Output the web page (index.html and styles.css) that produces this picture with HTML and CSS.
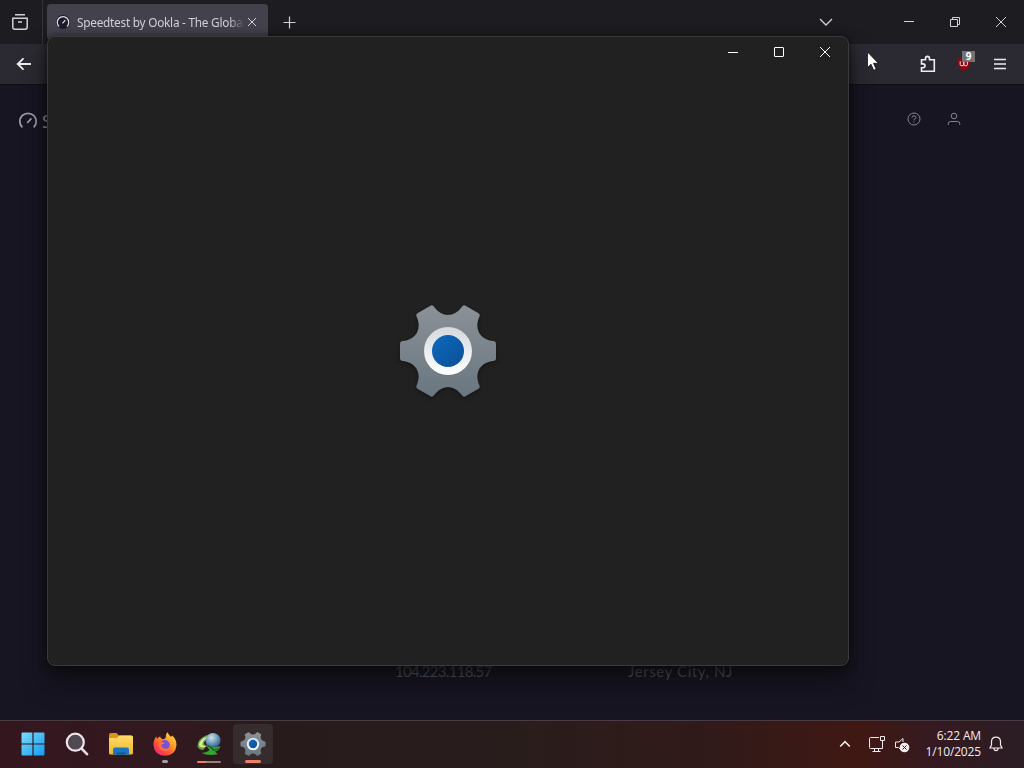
FILE: index.html
```html
<!DOCTYPE html>
<html lang="en">
<head>
<meta charset="utf-8">
<title>Desktop</title>
<link rel="stylesheet" href="styles.css">
</head>
<body>
<svg class="defs" width="0" height="0">
  <defs>
    <linearGradient id="metal" x1="0" y1="0" x2="0" y2="1"><stop offset="0" stop-color="#8b9197"/><stop offset="1" stop-color="#697680"/></linearGradient>
    <linearGradient id="ring" x1="0" y1="0" x2="0" y2="1"><stop offset="0" stop-color="#d5d9dc"/><stop offset="1" stop-color="#ffffff"/></linearGradient>
    <linearGradient id="hub" x1="0" y1="0" x2="1" y2="1"><stop offset="0" stop-color="#0d69bd"/><stop offset="1" stop-color="#0b4f96"/></linearGradient>
    <linearGradient id="win" x1="0" y1="0" x2="1" y2="1"><stop offset="0" stop-color="#7bdcfb"/><stop offset="1" stop-color="#149af0"/></linearGradient>
    <linearGradient id="folder" x1="0" y1="0" x2="0" y2="1"><stop offset="0" stop-color="#ffdc68"/><stop offset="1" stop-color="#f0b62d"/></linearGradient>
    <linearGradient id="fire" x1="1" y1="0" x2="0.2" y2="1"><stop offset="0" stop-color="#ffe94a"/><stop offset=".45" stop-color="#ff9626"/><stop offset=".75" stop-color="#ff4a3c"/><stop offset="1" stop-color="#e62482"/></linearGradient>
    <radialGradient id="globe" cx=".4" cy=".3" r=".8"><stop offset="0" stop-color="#d1e0e8"/><stop offset=".5" stop-color="#6d99bd"/><stop offset="1" stop-color="#1d3e78"/></radialGradient>
    <symbol id="gear" viewBox="-50 -50 100 100">
      <path d="M48-7Q48-10 45-10C32-11.5 26-22 31.2-34Q32.7-36.6 30.1-38.1L17.9-45.1Q15.3-46.6 13.8-44C6-33.5-6-33.5-13.8-44Q-15.3-46.6-17.9-45.1L-30.1-38.1Q-32.7-36.6-31.2-34C-26-22-32-11.5-45-10Q-48-10-48-7V7Q-48 10-45 10C-32 11.5-26 22-31.2 34Q-32.7 36.6-30.1 38.1L-17.9 45.1Q-15.3 46.6-13.8 44C-6 33.5 6 33.5 13.8 44Q15.3 46.6 17.9 45.1L30.1 38.1Q32.7 36.6 31.2 34C26 22 32 11.5 45 10Q48 10 48 7Z" fill="url(#metal)"/>
      <circle r="24" fill="url(#ring)"/><circle r="16" fill="url(#hub)"/>
    </symbol>
    <symbol id="gauge" viewBox="0 0 20 20">
      <path d="M4.3 16.4A8.2 8.2 0 1 1 15.7 16.4M9.2 12L13.4 7.4" fill="none" stroke="currentColor" stroke-width="1.8"/>
    </symbol>
  </defs>
</svg>
<div class="desktop">
  <section class="browser">
    <header class="tabs">
      <div class="history"><svg width="18" height="18" viewBox="0 0 18 18"><path d="M4 1.8H14M1.8 5.2H16.2V14Q16.2 16.2 14 16.2H4Q1.8 16.2 1.8 14ZM7 9H11" /></svg></div>
      <div class="tab">
        <svg class="favicon" width="14" height="14"><use href="#gauge"/></svg>
        <span class="tab-title">Speedtest by Ookla - The Globa</span>
        <svg class="tab-close" width="10" height="10" viewBox="0 0 10 10"><path d="M1 1L9 9M9 1L1 9"/></svg>
      </div>
      <svg class="new-tab" width="13" height="13" viewBox="0 0 13 13"><path d="M6.5 .5V12.5M.5 6.5H12.5"/></svg>
      <div class="frame-buttons">
        <svg class="all-tabs" width="14" height="14" viewBox="0 0 14 14"><path d="M1 4L7 10L13 4"/></svg>
        <svg width="12" height="12" viewBox="0 0 12 12"><path d="M1 5.5H11"/></svg>
        <svg width="12" height="12" viewBox="0 0 12 12"><path d="M1.5 3.5H8.5V10.5H1.5ZM3.5 3V1.5H10.5V8.5H9"/></svg>
        <svg width="12" height="12" viewBox="0 0 12 12"><path d="M1 1L11 11M11 1L1 11"/></svg>
      </div>
    </header>
    <div class="toolbar">
      <svg width="16" height="14" viewBox="0 0 16 14"><path d="M15 7H1.5M7.5 1.3L1.7 7L7.5 12.7" stroke-width="1.8"/></svg>
      <div class="extensions">
        <svg width="16" height="18" viewBox="0 0 16 18"><path d="M1.5 6V4.8H5.5V3.7Q5.5 1.4 7.5 1.4T9.5 3.7V4.8H14.3V16.2H1.5V12.7H3Q5 12.5 5 10.8T3 8.9H1.5V6" stroke-width="1.6"/></svg>
        <div class="blocker"><svg width="16" height="16" viewBox="0 0 16 16"><path class="shield" d="M8 .8Q10 2.4 14.5 2.5Q15.8 11 8 15.6Q.2 11 1.5 2.5Q6 2.4 8 .8Z"/><path class="mark" d="M4.2 5.3V8.5Q4.2 9.8 6 9.8T7.8 8.5V6V8.5Q7.8 9.8 9.6 9.8T11.4 8.5V6"/></svg><span class="count">9</span></div>
        <svg width="14" height="12" viewBox="0 0 14 12"><path d="M1 1.5H13M1 6H13M1 10.5H13" stroke-width="1.5"/></svg>
      </div>
    </div>
    <main class="page">
      <div class="site-head">
        <div class="brand"><svg width="20" height="20"><use href="#gauge"/></svg><span>SPEEDTEST</span></div>
        <div class="account">
          <svg width="14" height="14" viewBox="0 0 14 14"><circle cx="7" cy="7" r="6"/><path d="M5 5.6Q5 3.8 7 3.8T9 5.6Q9 6.6 7 7.4V8.4M7 9.5V10.7"/></svg>
          <svg width="14" height="14" viewBox="0 0 14 14"><circle cx="7" cy="4" r="2.8"/><path d="M1.3 13V11.5Q1.3 9.5 3.5 9.5H10.5Q12.7 9.5 12.7 11.5V13"/></svg>
        </div>
      </div>
      <div class="connection"><span class="ip">104.223.118.57</span><span class="city">Jersey City, NJ</span></div>
    </main>
  </section>

  <section class="settings">
    <div class="caption">
      <svg width="12" height="12" viewBox="0 0 12 12"><path d="M1 6.5H11"/></svg>
      <svg width="12" height="12" viewBox="0 0 12 12"><rect x="1.5" y="1.5" width="9" height="9" rx=".5"/></svg>
      <svg width="12" height="12" viewBox="0 0 12 12"><path d="M1 1L11 11M11 1L1 11"/></svg>
    </div>
    <div class="splash"><svg width="100" height="100"><use href="#gear"/></svg></div>
  </section>

  <svg class="pointer" width="14" height="21" viewBox="0 0 14 21"><path d="M1.5 1V16.6L5 13.2L7.7 19.3L10.2 18.2L7.5 12.3H12.4Z" fill="#fff" stroke="#111" stroke-width=".8"/></svg>

  <footer class="taskbar">
    <div class="apps">
      <div class="app"><svg width="24" height="24" viewBox="0 0 24 24" fill="url(#win)"><path d="M.5 1.5Q.5.5 1.5.5H11.4V11.4H.5ZM12.6.5H22.5Q23.5.5 23.5 1.5V11.4H12.6ZM.5 12.6H11.4V23.5H1.5Q.5 23.5.5 22.5ZM12.6 12.6H23.5V22.5Q23.5 23.5 22.5 23.5H12.6Z"/></svg></div>
      <div class="app"><svg width="24" height="24" viewBox="0 0 24 24"><path d="M16.5 16.5L22 22.2" stroke="#e8dce2" stroke-width="2.6" stroke-linecap="round"/><circle cx="10.3" cy="10.2" r="8.5" fill="#514951" stroke="#efe5ea" stroke-width="2.2"/></svg></div>
      <div class="app"><svg width="26" height="24" viewBox="0 0 26 24"><path d="M1 3Q1 1 3 1H8.5L11 3.5H23V10H1Z" fill="#d99717"/><path d="M1 6H8.8L11.5 3.5H23.5Q25 3.5 25 5V21Q25 22.5 23.5 22.5H2.5Q1 22.5 1 21Z" fill="url(#folder)"/><path d="M5 22.5V17.5Q5 15.5 7 15.5H19Q21 15.5 21 17.5V22.5Z" fill="#1976c5"/><path d="M8.5 22.5V20.5H17.5V22.5Z" fill="#105796"/></svg></div>
      <div class="app"><svg width="24" height="24" viewBox="0 0 24 24"><path d="M14.5.3Q15.5 2.8 18 4.8Q19 4.4 19.2 3.5Q23.7 7.8 23.5 13Q22.6 23.5 12 23.8Q1.2 23.4.5 13Q.3 8 3.4 4.2L4 7Q5.6 5 7 4.6Q7.4 6.5 9.6 7.2Q13.3 6.6 12.8 4.4Q12.7 1.5 14.5.3Z" fill="url(#fire)"/><circle cx="11.8" cy="13" r="5" fill="#7951d8"/><path d="M5.4 11Q8.5 8.8 12 11Q10 12.2 8.7 12.2Q7.7 15.6 11.5 16.6Q15 17.2 17 14.5Q16 19 11.5 19Q5.3 18 5.4 11Z" fill="#ff7139"/></svg><i class="run dot"></i></div>
      <div class="app"><svg width="26" height="24" viewBox="0 0 26 24"><path d="M1.5 14.5Q1.5 6.5 10.5 3.2L15 5Q7.5 8.5 8 12L10.5 14L7 18Q2.5 17.5 1.5 14.5Z" fill="#58a848"/><path d="M3 13.5Q3.5 7.5 10.3 4.8L12 5.6Q6.4 8.8 6.2 12.6Q7.4 14.5 10.3 14.4Q5.5 17 3 13.5Z" fill="#e8e584"/><circle cx="17" cy="8.6" r="7.6" fill="url(#globe)"/><path d="M9 13.2Q15 12 18 15.5L24.5 14.2Q23.5 18 19 19.5Q20 21 22 22Q13 24.3 5.5 21Q11.8 20.3 13.5 18Q12 14.8 9 13.2Z" fill="#36a52f"/><path d="M10 13.2Q15.5 13 18 17.5Q20.5 17.2 23 15.5Q21 18.8 17 18.8Q14.5 15 10 13.2Z" fill="#185c20"/></svg><i class="run mixed"></i></div>
      <div class="app active"><svg width="26" height="26"><use href="#gear"/></svg><i class="run"></i></div>
    </div>
    <div class="tray">
      <svg class="chevron" width="12" height="8" viewBox="0 0 12 8"><path d="M1.2 6.5L6 1.7L10.8 6.5" stroke-width="1.6"/></svg>
      <svg class="network" width="18" height="18" viewBox="0 0 18 18"><path d="M11 2.5H2.5Q1.5 2.5 1.5 3.5V12.5Q1.5 13.5 2.5 13.5H14.5V7M6.5 13.5V16.5M10.5 13.5V16.5M4.5 16.5H12.5M12.5 1.5H16.5V5.5H12.5ZM14.5 5.5V7"/></svg>
      <svg class="sound" width="16" height="16" viewBox="0 0 16 16"><path d="M9 5V1.5L5 5H1.5V10.5H4.5L7 13"/><circle cx="10.5" cy="10.5" r="4.8" fill="#f3eaec" stroke="none"/><path d="M8.5 8.5L12.5 12.5M12.5 8.5L8.5 12.5" stroke="#381b21"/></svg>
      <div class="clock"><span>6:22 AM</span><span>1/10/2025</span></div>
      <svg width="14" height="16" viewBox="0 0 14 16"><path d="M1 12H13L11.5 9V5.5Q11.3 1.2 7 1.2T2.5 5.5V9ZM4.8 12.2Q5.2 14.7 7 14.7T9.2 12.2" stroke-width="1.2"/></svg>
    </div>
  </footer>
</div>
</body>
</html>
```
FILE: styles.css
```css
* { box-sizing: border-box; }
body { margin: 0; overflow: hidden; background: #171521; font-family: "Noto Sans", "Open Sans", sans-serif; }
svg { display: block; flex: none; }
.defs { position: absolute; }
.desktop { position: relative; width: 1024px; height: 768px; display: flex; flex-direction: column; overflow: hidden; }
.browser { height: 720px; display: flex; flex-direction: column; background: #181523; }
.tabs { height: 44px; display: flex; align-items: center; background: #1d1d21; color: #d2d2d6; }
.tabs svg, .toolbar svg, .account svg, .caption svg, .tray svg { fill: none; stroke: currentColor; stroke-width: 1; }
.history { width: 43px; height: 44px; padding: 13px 0 0 11px; border-right: 1px solid #34333b; }
.tabs .history svg { stroke-width: 1.5; }
.tab { width: 221px; height: 36px; margin: 0 0 0 4px; padding: 0 11px 0 9px; display: flex; align-items: center; border-radius: 4px; background: #42414c; font-size: 12px; }
.tab .favicon { color: #dddde2; background: #1c1b2b; border-radius: 50%; stroke: none; }
.tab-title { width: 167px; margin-left: 7px; overflow: hidden; white-space: nowrap; font-size: 11.8px; letter-spacing: -0.24px; color: #d0cfd6; mask-image: linear-gradient(90deg, #000 91%, transparent 100%); }
.tab-close { margin-left: 3px; }
.new-tab { margin-left: 15px; }
.tabs .new-tab { stroke-width: 1.2; }
.frame-buttons { margin-left: auto; padding-right: 17px; display: flex; align-items: center; gap: 34px; }
.frame-buttons .all-tabs { margin-right: 36px; stroke-width: 1.3; }
.toolbar { height: 41px; padding: 0 17px 0 16px; display: flex; align-items: center; justify-content: space-between; background: #2b2a32; border-bottom: 1px solid #0f0e16; color: #eeeef1; }
.extensions { display: flex; align-items: center; gap: 20px; }
.blocker { position: relative; width: 16px; height: 16px; margin-right: 1px; }
.toolbar .shield { fill: #8b0812; stroke: none; }
.toolbar .mark { stroke: #ffdede; }
.count { position: absolute; left: 6px; top: -5px; width: 13px; height: 11px; background: #737373; color: #fff; font-size: 10px; font-weight: 700; line-height: 11px; text-align: center; }
.page { flex: 1; display: flex; flex-direction: column; justify-content: space-between; padding-bottom: 39px; color: #85838e; }
.site-head { display: flex; justify-content: space-between; padding: 26px 63px 0 18px; }
.brand { display: flex; align-items: center; gap: 4px; font-size: 18px; line-height: 20px; color: #a09ea8; }
.account { display: flex; gap: 26px; padding-top: 1px; }
.connection { display: flex; padding-left: 395px; font: 15px/20px "Lato", sans-serif; color: #626169; }
.ip { width: 233px; letter-spacing: -0.7px; }
.city { letter-spacing: 0.6px; }
.settings { position: absolute; left: 47px; top: 36px; width: 802px; height: 630px; display: flex; flex-direction: column; background: #212121; border: 1px solid #3a3a3c; border-radius: 8px; box-shadow: 0 16px 24px 0 rgba(10,10,12,.7), 0 1px 9px rgba(0,0,0,.6); }
.caption { height: 30px; display: flex; justify-content: flex-end; align-items: center; gap: 34px; padding-right: 17px; color: #fff; }
.splash { flex: 1; display: flex; justify-content: center; padding-top: 234px; filter: drop-shadow(0 2px 2px rgba(0,0,0,.35)); }
.pointer { position: absolute; left: 866px; top: 51px; }
.taskbar { position: relative; height: 48px; display: flex; align-items: center; justify-content: space-between; padding: 0 21px 1px 13px; border-top: 1px solid #4a3c43; background: linear-gradient(90deg, #35161f 0, #31191f 18%, #271b1c 26%, #291d1c 50%, #311a19 70%, #401813 84%, #351a20 91%, #2b1d24 100%); color: #f3eaec; }
.apps { display: flex; gap: 4px; }
.app { position: relative; width: 40px; height: 40px; display: flex; align-items: center; justify-content: center; border-radius: 4px; }
.app:first-child { padding-right: 1px; }
.active { background: #362c2d; }
.run { position: absolute; left: 12px; bottom: 1px; width: 16px; height: 3px; border-radius: 2px; background: #ed8068; }
.dot { left: 17px; width: 6px; background: #a99da1; }
.mixed { left: 8px; width: 24px; height: 2px; background: linear-gradient(90deg, #ed8068 36%, #998075 40%); }
.tray { display: flex; align-items: center; }
.network { margin-left: 17px; }
.sound { margin: 2px 0 0 8px; }
.clock { width: 60px; margin: 0 8px 0 11px; display: flex; flex-direction: column; align-items: flex-end; font: 12px/16px "Open Sans", sans-serif; letter-spacing: -0.15px; }
```
